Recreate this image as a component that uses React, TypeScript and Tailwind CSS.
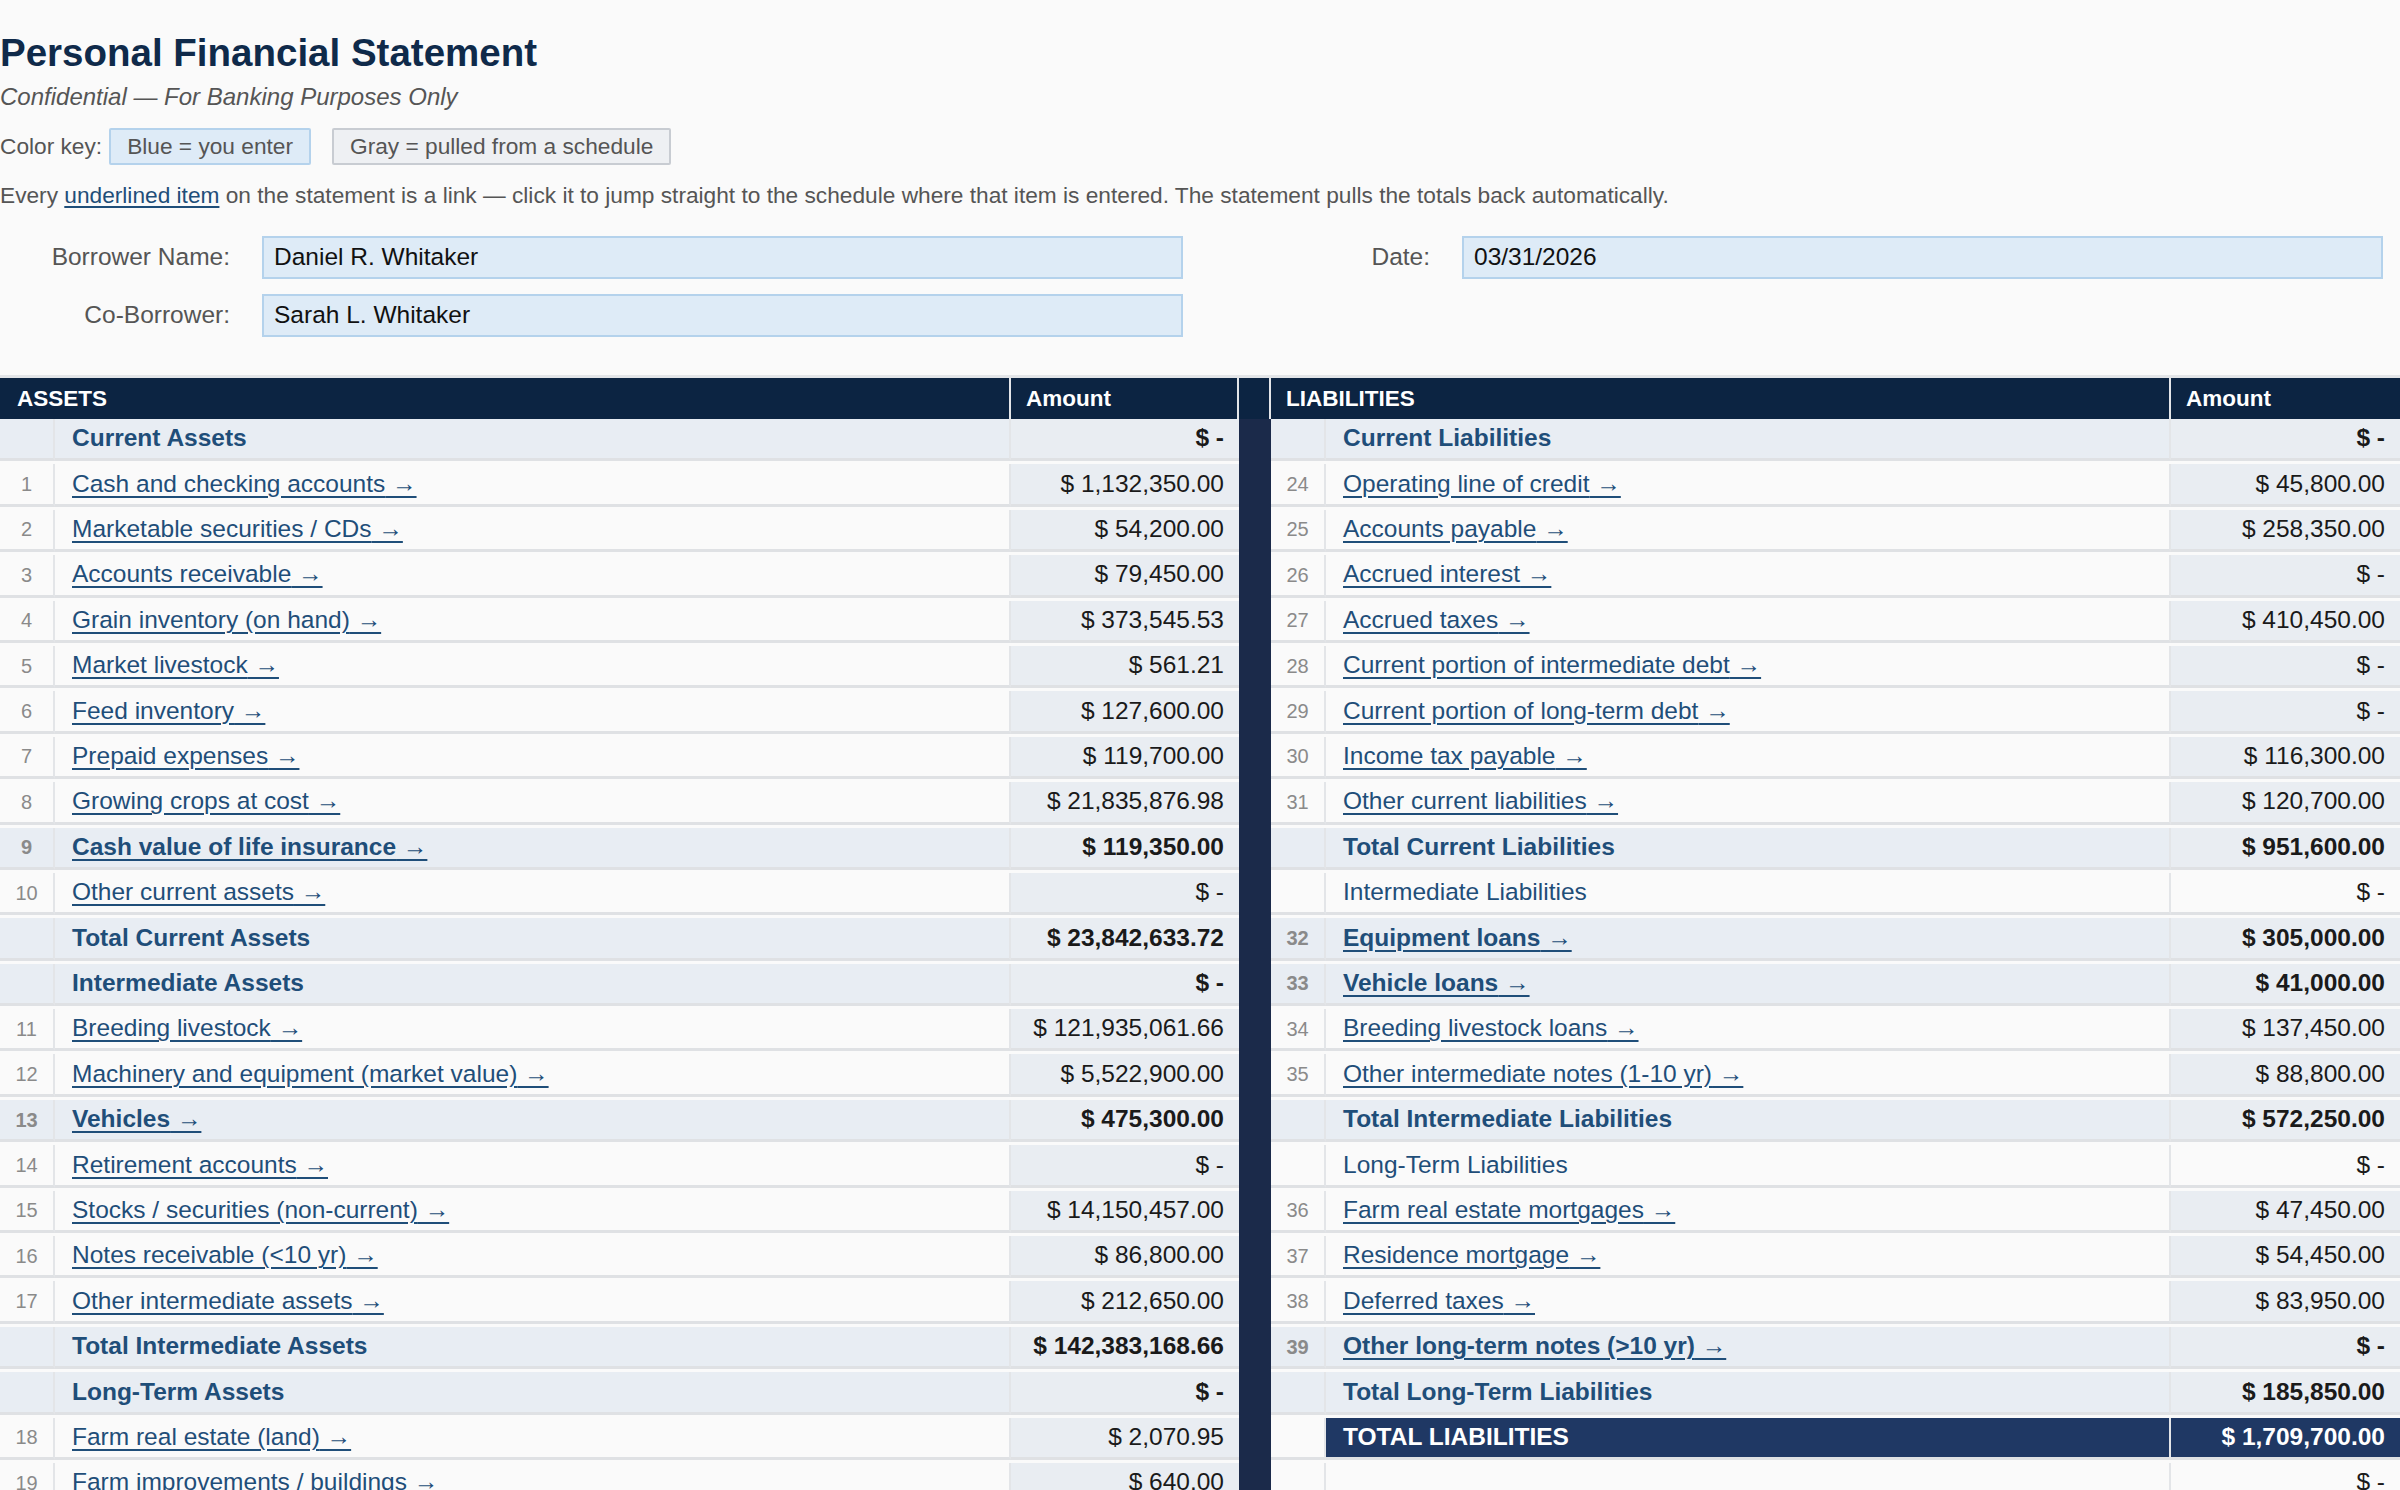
import React from "react";

type R = { n?: string; label: string; amt: string; kind: "sec" | "item" | "bold" | "plain" | "grand" | "blank" };

const left: R[] = [
  { label: "Current Assets", amt: "$ -", kind: "sec" },
  { n: "1", label: "Cash and checking accounts", amt: "$ 1,132,350.00", kind: "item" },
  { n: "2", label: "Marketable securities / CDs", amt: "$ 54,200.00", kind: "item" },
  { n: "3", label: "Accounts receivable", amt: "$ 79,450.00", kind: "item" },
  { n: "4", label: "Grain inventory (on hand)", amt: "$ 373,545.53", kind: "item" },
  { n: "5", label: "Market livestock", amt: "$ 561.21", kind: "item" },
  { n: "6", label: "Feed inventory", amt: "$ 127,600.00", kind: "item" },
  { n: "7", label: "Prepaid expenses", amt: "$ 119,700.00", kind: "item" },
  { n: "8", label: "Growing crops at cost", amt: "$ 21,835,876.98", kind: "item" },
  { n: "9", label: "Cash value of life insurance", amt: "$ 119,350.00", kind: "bold" },
  { n: "10", label: "Other current assets", amt: "$ -", kind: "item" },
  { label: "Total Current Assets", amt: "$ 23,842,633.72", kind: "sec" },
  { label: "Intermediate Assets", amt: "$ -", kind: "sec" },
  { n: "11", label: "Breeding livestock", amt: "$ 121,935,061.66", kind: "item" },
  { n: "12", label: "Machinery and equipment (market value)", amt: "$ 5,522,900.00", kind: "item" },
  { n: "13", label: "Vehicles", amt: "$ 475,300.00", kind: "bold" },
  { n: "14", label: "Retirement accounts", amt: "$ -", kind: "item" },
  { n: "15", label: "Stocks / securities (non-current)", amt: "$ 14,150,457.00", kind: "item" },
  { n: "16", label: "Notes receivable (<10 yr)", amt: "$ 86,800.00", kind: "item" },
  { n: "17", label: "Other intermediate assets", amt: "$ 212,650.00", kind: "item" },
  { label: "Total Intermediate Assets", amt: "$ 142,383,168.66", kind: "sec" },
  { label: "Long-Term Assets", amt: "$ -", kind: "sec" },
  { n: "18", label: "Farm real estate (land)", amt: "$ 2,070.95", kind: "item" },
  { n: "19", label: "Farm improvements / buildings", amt: "$ 640.00", kind: "item" },
];

const right: R[] = [
  { label: "Current Liabilities", amt: "$ -", kind: "sec" },
  { n: "24", label: "Operating line of credit", amt: "$ 45,800.00", kind: "item" },
  { n: "25", label: "Accounts payable", amt: "$ 258,350.00", kind: "item" },
  { n: "26", label: "Accrued interest", amt: "$ -", kind: "item" },
  { n: "27", label: "Accrued taxes", amt: "$ 410,450.00", kind: "item" },
  { n: "28", label: "Current portion of intermediate debt", amt: "$ -", kind: "item" },
  { n: "29", label: "Current portion of long-term debt", amt: "$ -", kind: "item" },
  { n: "30", label: "Income tax payable", amt: "$ 116,300.00", kind: "item" },
  { n: "31", label: "Other current liabilities", amt: "$ 120,700.00", kind: "item" },
  { label: "Total Current Liabilities", amt: "$ 951,600.00", kind: "sec" },
  { label: "Intermediate Liabilities", amt: "$ -", kind: "plain" },
  { n: "32", label: "Equipment loans", amt: "$ 305,000.00", kind: "bold" },
  { n: "33", label: "Vehicle loans", amt: "$ 41,000.00", kind: "bold" },
  { n: "34", label: "Breeding livestock loans", amt: "$ 137,450.00", kind: "item" },
  { n: "35", label: "Other intermediate notes (1-10 yr)", amt: "$ 88,800.00", kind: "item" },
  { label: "Total Intermediate Liabilities", amt: "$ 572,250.00", kind: "sec" },
  { label: "Long-Term Liabilities", amt: "$ -", kind: "plain" },
  { n: "36", label: "Farm real estate mortgages", amt: "$ 47,450.00", kind: "item" },
  { n: "37", label: "Residence mortgage", amt: "$ 54,450.00", kind: "item" },
  { n: "38", label: "Deferred taxes", amt: "$ 83,950.00", kind: "item" },
  { n: "39", label: "Other long-term notes (>10 yr)", amt: "$ -", kind: "bold" },
  { label: "Total Long-Term Liabilities", amt: "$ 185,850.00", kind: "sec" },
  { label: "TOTAL LIABILITIES", amt: "$ 1,709,700.00", kind: "grand" },
  { label: "", amt: "$ -", kind: "blank" },
];

function Cells({ r }: { r: R }) {
  const shaded = r.kind === "sec" || r.kind === "bold";
  const base = "h-[42.4px] border-b-[3px] border-[#dfe1e4] flex items-center whitespace-nowrap";
  const numBg = shaded ? "bg-[#e8edf3]" : "bg-[#fafafa]";
  const labBg = r.kind === "grand" ? "bg-[#1f3864]" : shaded ? "bg-[#e8edf3]" : "bg-[#fafafa]";
  const amtBg = r.kind === "grand" ? "bg-[#1f3864]" : r.kind === "plain" || r.kind === "blank" ? "bg-[#fafafa]" : "bg-[#e9edf2]";
  const isLink = r.kind === "item" || r.kind === "bold";
  const bold = r.kind !== "item" && r.kind !== "plain" && r.kind !== "blank";
  let label: React.ReactNode;
  if (isLink) {
    label = (
      <a className={`text-[#1f4e79] underline decoration-[2px] underline-offset-[4px] ${bold ? "font-bold" : ""}`} href="#">
        {r.label} →
      </a>
    );
  } else {
    label = (
      <span className={r.kind === "grand" ? "text-white font-bold" : `text-[#1f4e79] ${bold ? "font-bold" : ""}`}>{r.label}</span>
    );
  }
  return (
    <>
      <div className={`${base} ${numBg} justify-center border-r-2 border-r-[#e3e5e8] text-[20px] text-[#8a8a8a] ${r.kind === "bold" ? "font-bold" : ""}`}>{r.n ?? ""}</div>
      <div className={`${base} ${labBg} px-[17px] border-r-2 border-r-[#e3e5e8]`}>{label}</div>
      <div className={`${base} ${amtBg} justify-end px-[15px] ${r.kind === "grand" ? "text-white" : "text-[#1a1a1a]"} ${bold ? "font-bold" : ""}`}>{r.amt}</div>
    </>
  );
}

export default function App() {
  return (
    <div className="bg-[#fafafa] overflow-hidden h-[1490px]" style={{ fontFamily: '"Liberation Sans", Arial, sans-serif' }}>
      <div className="pt-[30px]">
        <h1 className="text-[38.5px] font-bold text-[#0f2a4a] leading-[46px]">Personal Financial Statement</h1>
        <div className="mt-[6px] text-[24px] italic text-[#555] leading-[30px]">Confidential — For Banking Purposes Only</div>
        <div className="mt-[16px] flex items-center text-[22.7px] text-[#555]">
          <span>Color key:</span>
          <span className="ml-[7px] h-[37px] px-[16px] flex items-center bg-[#deebf7] border-2 border-[#b4d2ec] rounded-[2px]">Blue = you enter</span>
          <span className="ml-[21px] h-[37px] px-[16px] flex items-center bg-[#eef0f3] border-2 border-[#c8ccd2] rounded-[2px]">Gray = pulled from a schedule</span>
        </div>
        <div className="mt-[16px] text-[22.7px] text-[#555] leading-[28px] whitespace-nowrap">
          Every <a href="#" className="text-[#1f4e79] underline decoration-[2px] underline-offset-[3px]">underlined item</a> on the statement is a link — click it to jump straight to the schedule where that item is entered. The statement pulls the totals back automatically.
        </div>
        <div className="mt-[27px] grid grid-cols-[230px_921px_215px_921px] gap-x-[32px] gap-y-[15px] items-center text-[24.5px]">
          <div className="text-right text-[#555]">Borrower Name:</div>
          <div className="h-[43px] bg-[#deebf7] border-2 border-[#b4d2ec] flex items-center px-[10px] text-[#111]">Daniel R. Whitaker</div>
          <div className="text-right text-[#555]">Date:</div>
          <div className="h-[43px] bg-[#deebf7] border-2 border-[#b4d2ec] flex items-center px-[10px] text-[#111]">03/31/2026</div>
          <div className="text-right text-[#555]">Co-Borrower:</div>
          <div className="h-[43px] bg-[#deebf7] border-2 border-[#b4d2ec] flex items-center px-[10px] text-[#111]">Sarah L. Whitaker</div>
        </div>
        <div className="mt-[38px] border-t-[3px] border-[#e3e5e8] grid grid-cols-[55px_956px_228px_32px_55px_845px_229px] text-[24.5px]">
          <div className="col-span-2 h-[41px] bg-[#0c2442] text-white font-bold text-[22.5px] flex items-center px-[17px] border-r-2 border-[#e3e5e8]">ASSETS</div>
          <div className="h-[41px] bg-[#0c2442] text-white font-bold text-[22.5px] flex items-center px-[15px] border-r-2 border-[#e3e5e8]">Amount</div>
          <div className="h-[41px] bg-[#0c2442] border-r-2 border-[#e3e5e8]"></div>
          <div className="col-span-2 h-[41px] bg-[#0c2442] text-white font-bold text-[22.5px] flex items-center px-[15px] border-r-2 border-[#e3e5e8]">LIABILITIES</div>
          <div className="h-[41px] bg-[#0c2442] text-white font-bold text-[22.5px] flex items-center px-[15px]">Amount</div>
          {left.map((l, i) => (
            <React.Fragment key={i}>
              <Cells r={l} />
              <div className="bg-[#1b2a4a] h-[45.4px]"></div>
              <Cells r={right[i]} />
            </React.Fragment>
          ))}
        </div>
      </div>
    </div>
  );
}
